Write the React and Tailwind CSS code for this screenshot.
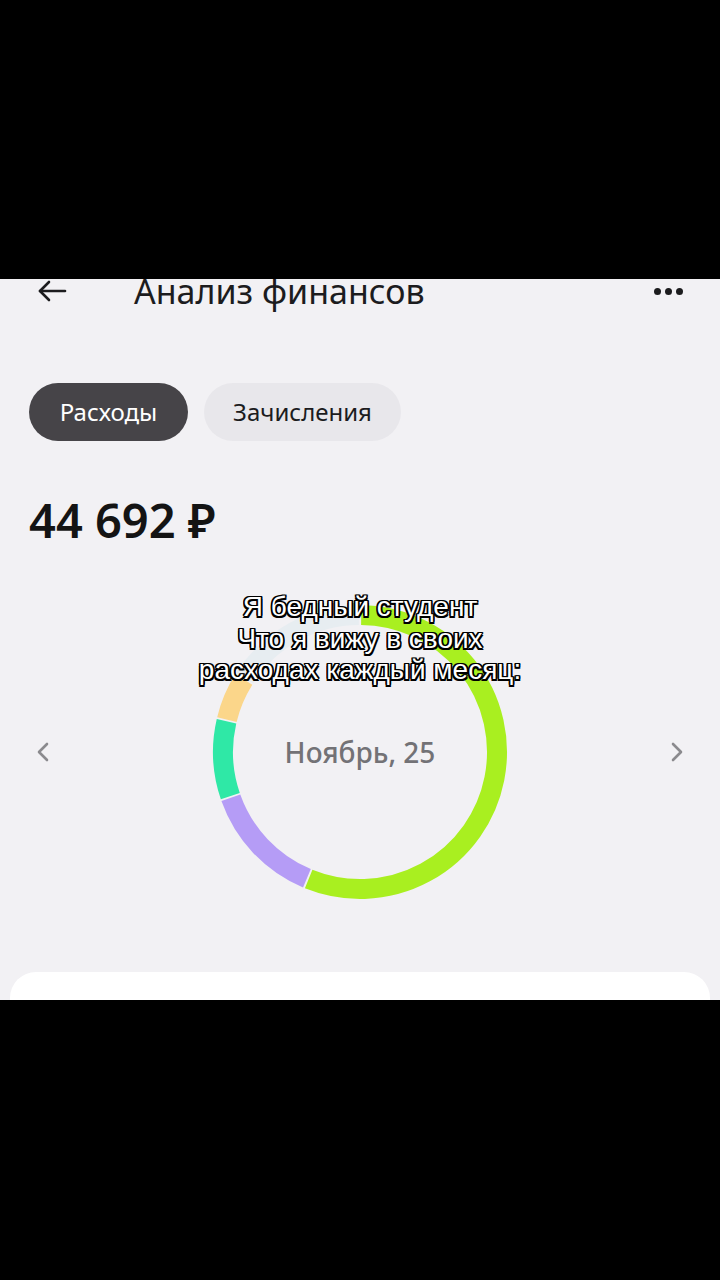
import React from "react";

function polar(cx, cy, r, deg) {
  const a = (deg * Math.PI) / 180;
  return [cx + r * Math.sin(a), cy - r * Math.cos(a)];
}
function arc(cx, cy, r, a0, a1) {
  const [x0, y0] = polar(cx, cy, r, a0);
  const [x1, y1] = polar(cx, cy, r, a1);
  const large = a1 - a0 > 180 ? 1 : 0;
  return `M ${x0} ${y0} A ${r} ${r} 0 ${large} 1 ${x1} ${y1}`;
}

const segs = [
  { a0: 0.5, a1: 202, c: "#a9ef20" },
  { a0: 202.8, a1: 250.5, c: "#b59cf6" },
  { a0: 251.2, a1: 283, c: "#2fe8a6" },
  { a0: 283.7, a1: 302, c: "#fbd68a" },
  { a0: 302.7, a1: 359.5, c: "#e7edf1" },
];

function Donut() {
  return (
    <svg width="300" height="300" viewBox="0 0 300 300">
      {segs.map((s, i) => (
        <path key={i} d={arc(150, 150, 137, s.a0, s.a1)} fill="none" stroke={s.c} strokeWidth="20" />
      ))}
    </svg>
  );
}

export default function App() {
  return (
    <div className="w-[720px] h-[1280px] bg-black flex flex-col" style={{ fontFamily: '"Noto Sans", sans-serif' }}>
      <div className="h-[279px] shrink-0 bg-black" />
      <div className="h-[721px] shrink-0 bg-[#f2f1f4] overflow-hidden relative flex flex-col">
        {/* header */}
        <div className="-mt-[18px] h-[60px] flex items-center px-[37px]">
          <svg width="30" height="24" viewBox="0 0 30 24" fill="none" stroke="#1c1c1e" strokeWidth="2.6" strokeLinecap="round" strokeLinejoin="round">
            <path d="M28 12H3" />
            <path d="M12 3L3 12L12 21" />
          </svg>
          <div className="ml-[67px] text-[34px] leading-none text-[#1c1c1e]">Анализ финансов</div>
          <div className="ml-auto flex gap-[4px]">
            <span className="w-[7px] h-[7px] rounded-full bg-[#1c1c1e]" />
            <span className="w-[7px] h-[7px] rounded-full bg-[#1c1c1e]" />
            <span className="w-[7px] h-[7px] rounded-full bg-[#1c1c1e]" />
          </div>
        </div>
        {/* tabs */}
        <div className="mt-[62px] flex gap-[16px] px-[29px]">
          <div className="h-[58px] w-[159px] rounded-full bg-[#464448] text-white text-[24px] flex items-center justify-center">Расходы</div>
          <div className="h-[58px] w-[197px] rounded-full bg-[#e8e7eb] text-[#1c1c1e] text-[24px] flex items-center justify-center">Зачисления</div>
        </div>
        {/* amount */}
        <div className="mt-[51px] px-[29px] h-[56px] flex items-center text-[47px] font-semibold text-[#141414] leading-none">44 692 ₽</div>
        {/* chart */}
        <div className="mt-[54px] flex items-center justify-between px-[36px]">
          <svg width="14" height="22" viewBox="0 0 14 22" fill="none" stroke="#8b8a8e" strokeWidth="2.6" strokeLinecap="round" strokeLinejoin="round">
            <path d="M11 3L3 11L11 19" />
          </svg>
          <div className="relative w-[300px] h-[300px]">
            <Donut />
            <div className="absolute inset-0 flex items-center justify-center text-[28px] font-medium text-[#737276]">Ноябрь, 25</div>
          </div>
          <svg width="14" height="22" viewBox="0 0 14 22" fill="none" stroke="#8b8a8e" strokeWidth="2.6" strokeLinecap="round" strokeLinejoin="round">
            <path d="M3 3L11 11L3 19" />
          </svg>
        </div>
        {/* bottom card */}
        <div className="mt-[70px] mx-[10px] flex-1 bg-white rounded-t-[26px]" />
        {/* caption overlay */}
        <div
          className="absolute left-0 right-0 top-[312px] text-center text-white text-[28px] leading-[31.5px]"
          style={{
            fontFamily: '"Liberation Sans", Arial, sans-serif',
            textShadow:
              "-1.5px -1.5px 0 #000, 1.5px -1.5px 0 #000, -1.5px 1.5px 0 #000, 1.5px 1.5px 0 #000, 0 -1.5px 0 #000, 0 1.5px 0 #000, -1.5px 0 0 #000, 1.5px 0 0 #000",
          }}
        >
          <div>Я бедный студент</div>
          <div>Что я вижу в своих</div>
          <div>расходах каждый месяц:</div>
        </div>
      </div>
      <div className="flex-1 bg-black" />
    </div>
  );
}
